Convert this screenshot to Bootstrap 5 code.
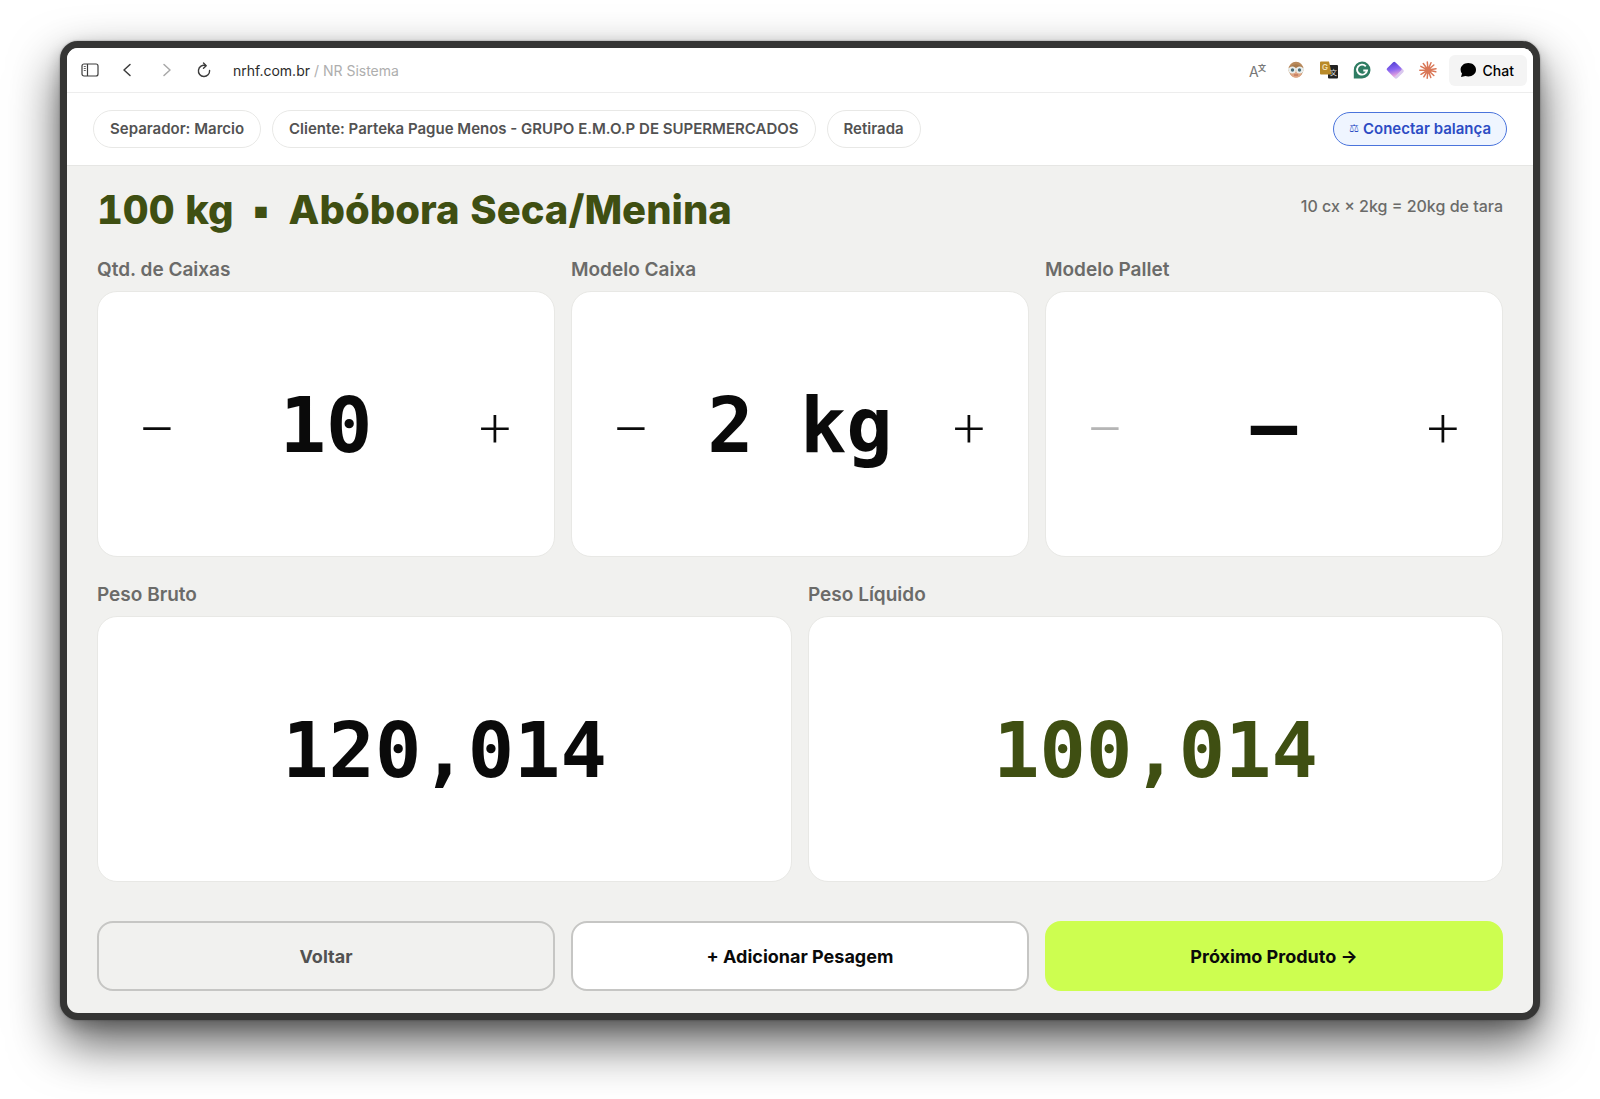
<!DOCTYPE html>
<html lang="pt-BR">
<head>
<meta charset="utf-8">
<meta name="viewport" content="width=device-width, initial-scale=1">
<title>NR Sistema</title>
<link href="https://cdn.jsdelivr.net/npm/bootstrap@5.3.0/dist/css/bootstrap.min.css" rel="stylesheet">
<style>
  body { font-family: Inter, "Liberation Sans", sans-serif; background: #fff; color: #0a0a0a; }
  .desktop { min-height: 100vh; padding: 41px 60px 79px; }
  .window { border: 7px solid #353534; border-radius: 18px; background: #f1f1ef; overflow: hidden;
    box-shadow: 0 23px 50px rgba(0,0,0,.65), 0 6px 16px rgba(0,0,0,.2), 0 0 2px rgba(0,0,0,.4); }
  .toolbar { height: 45px; padding: 0 6px 0 14px; border-bottom: 1px solid #ededed; font-size: 14px; }
  .tool { padding: 0; border: 0; background: none; display: flex; color: #3c3c3c; }
  .nav-tools { gap: 20px; }
  .ext-tools { gap: 15px; margin-right: 12px; }
  .site { color: #2b2b2b; text-decoration: none; }
  .crumb { color: #aeaeae; }
  .chat-btn { height: 31px; padding: 0 13px 0 11px; gap: 7px; border: 0; border-radius: 6px; background: #f4f4f4; color: #000; font-weight: 500; }
  .info-bar { padding: 17px 26px; border-bottom: 1px solid #e6e6e4; }
  .chips { gap: 11px; }
  .chip { border: 1px solid #e8e8e6; border-radius: 19px; padding: 0 16px; line-height: 36px; font-size: 15px; font-weight: 600; color: #525252; }
  .scale-btn { border: 1px solid #4a74dc; border-radius: 17px; padding: 0 15px; line-height: 32px; font-size: 15px; font-weight: 600; color: #2c4cc4; background: #eff5ff; gap: 4px; }
  .scale-icon { font-family: "DejaVu Sans", sans-serif; font-size: 11px; font-weight: 400; }
  .board { padding: 19px 30px 22px; }
  .product { font-size: 40px; line-height: 50px; font-weight: 800; color: #3f4f12; font-variant-numeric: tabular-nums; margin-bottom: 21px; }
  .product-dot { margin: 0 8px; }
  .tare { font-size: 16px; line-height: 24px; padding-top: 9px; font-weight: 500; color: #6b6b69; }
  .fields { --bs-gutter-x: 16px; --bs-gutter-y: 0; }
  .actions { margin-top: 39px; }
  .field-label { font-size: 19px; line-height: 28px; font-weight: 600; color: #6b6b69; margin-bottom: 7px; display: block; }
  .panel { height: 266px; border: 1px solid #e8e8e5; border-radius: 20px; background: #fff; }
  .stepper { padding: 0 31px; }
  .step-btn { width: 56px; height: 64px; padding: 0; border: 0; background: none; color: #0a0a0a; font-size: 64px; line-height: 64px; font-weight: 200; }
  .step-btn:disabled { color: #b5b5b5; }
  .reading { font-family: "DejaVu Sans Mono", "Liberation Mono", monospace; font-weight: 700; font-size: 77px; line-height: 90px; padding-top: 3px; color: #0a0a0a; }
  .reading-net { color: #3f4f12; }
  .action { width: 100%; height: 70px; border: 2px solid #c6c6c4; border-radius: 16px; font-size: 18px; font-weight: 700; background: none; color: #525252; }
  .action-add { background: #fff; color: #0a0a0a; }
  .action-next { background: #cdfe50; border-color: #cdfe50; color: #0a0a0a; }
</style>
<script src="https://cdn.jsdelivr.net/npm/bootstrap@5.3.0/dist/js/bootstrap.bundle.min.js"></script>
</head>
<body>
<div class="desktop">
  <div class="window">
    <header class="toolbar d-flex align-items-center bg-white">
      <div class="nav-tools d-flex align-items-center">
        <button class="tool" aria-label="Barra lateral"><svg width="18" height="18" viewBox="0 0 18 18" fill="none" stroke="currentColor" stroke-width="1.200"><rect x="1" y="3" width="16" height="12" rx="2"/><path d="M6.500 3v12"/><path d="M2.800 5.500h2M2.800 7.500h2M2.800 9.500h2" stroke-width=".8"/></svg></button>
        <button class="tool" aria-label="Página anterior"><svg width="18" height="18" viewBox="0 0 18 18" fill="none" stroke="currentColor" stroke-width="1.500" stroke-linecap="round" stroke-linejoin="round"><path d="M11 3.500 5 9l6 5.500"/></svg></button>
        <button class="tool" aria-label="Próxima página"><svg width="18" height="18" viewBox="0 0 18 18" fill="none" stroke="#a8a8a8" stroke-width="1.500" stroke-linecap="round" stroke-linejoin="round"><path d="m7 3.500 6 5.500-6 5.500"/></svg></button>
        <button class="tool" aria-label="Recarregar"><svg width="18" height="18" viewBox="0 0 18 18" fill="none" stroke="currentColor" stroke-width="1.400" stroke-linecap="round" stroke-linejoin="round"><path d="M14.600 9.500A5.600 5.600 0 1 1 10.500 4.500"/><path d="m8.500 2 2.700 2.700L8.500 7.200"/></svg></button>
        <div><a class="site" href="#">nrhf.com.br</a> <span class="crumb">/ NR Sistema</span></div>
      </div>
      <div class="ext-tools d-flex align-items-center ms-auto">
        <button class="tool me-1" aria-label="Traduzir página"><svg width="20" height="20" viewBox="0 0 20 20" fill="#777"><text x="1" y="17" font-family="Inter, sans-serif" font-size="14">A</text><text x="10" y="11" font-family="'Noto Sans CJK SC', sans-serif" font-size="8" font-weight="700">文</text></svg></button>
        <button class="tool" aria-label="Perfil"><svg width="18" height="18" viewBox="0 0 18 18"><ellipse cx="9" cy="8.500" rx="7.500" ry="7.800" fill="#b98a5c"/><path d="M3 10h12c0 4-2.500 6.800-6 6.800S3 14 3 10z" fill="#dfa583"/><path d="M2.500 6Q9 .5 15.500 6z" fill="#a87b4e"/><circle cx="5.300" cy="9" r="3.600" fill="#e9eeee"/><circle cx="12.700" cy="9" r="3.600" fill="#e9eeee"/><path d="M1 8h16" stroke="#e9eeee" stroke-width="1.500"/><circle cx="5.500" cy="9" r="1.700" fill="#4b6e78"/><circle cx="12.500" cy="9" r="1.700" fill="#4b6e78"/><path d="M7 14h4" stroke="#b5654f" stroke-width="1"/></svg></button>
        <button class="tool" aria-label="Tradutor"><svg width="18" height="18" viewBox="0 0 18 18"><rect x="8" y="4" width="10" height="13.500" rx="1" fill="#222"/><path d="M1 .5h8l3 13H1a1 1 0 0 1-1-1v-11a1 1 0 0 1 1-1z" fill="#b98a28"/><text x="2" y="9" font-family="Inter, sans-serif" font-size="8" font-weight="600" fill="#f1dfb4">G</text><text x="10" y="14" font-family="'Noto Sans CJK SC', sans-serif" font-size="7" fill="#ddd">文</text></svg></button>
        <button class="tool" aria-label="Corretor"><svg width="18" height="18" viewBox="0 0 18 18"><path d="M9 .5A8.500 8.500 0 1 1 9 17.500H.8V9A8.300 8.500 0 0 1 9 .5z" fill="#2f7d63"/><path d="M12.800 5.300A5 5 0 1 0 14 9.500h-3.700" fill="none" stroke="#fff" stroke-width="1.900"/></svg></button>
        <button class="tool" aria-label="Extensão"><svg width="18" height="18" viewBox="0 0 18 18"><defs><linearGradient id="gem" x1="0" y1=".2" x2="1" y2=".8"><stop offset="0" stop-color="#5a45d6"/><stop offset=".5" stop-color="#8a66f2"/><stop offset="1" stop-color="#eba6dc"/></linearGradient></defs><rect x="4" y="4" width="12" height="12" rx="2" transform="rotate(45 10 10)" fill="#d9c8ee"/><rect x="2.500" y="2.500" width="11.500" height="11.500" rx="1.500" transform="rotate(45 8.200 8.200)" fill="url(#gem)"/></svg></button>
        <button class="tool" aria-label="Assistente"><svg width="18" height="18" viewBox="0 0 18 18" stroke="#d97757" stroke-width="1.500" stroke-linecap="round"><path d="M9 9 8.300 1M9 9l3-7.300M9 9l5.800-5M9 9l8-1.300M9 9l7.800 1.800M9 9l5.800 5.500M9 9l2.800 7.500M9 9l-.8 8.200M9 9l-4.200 6.800M9 9l-7 4.300M9 9l-8.200.2M9 9 1.800 5.300M9 9 4.300 2.500"/></svg></button>
      </div>
      <button class="chat-btn d-flex align-items-center"><svg width="16" height="16" viewBox="0 0 16 16"><path d="M8.300 1C12.700 1 16 3.900 16 7.700s-3.300 6.700-7.700 6.700c-1 0-2-.2-2.900-.5L1 15l1-3.400A6.300 6.300 0 0 1 .6 7.700C.6 3.900 3.900 1 8.300 1z"/></svg><span>Chat</span></button>
    </header>
    <div class="info-bar d-flex align-items-center justify-content-between bg-white">
      <div class="chips d-flex">
        <span class="chip">Separador: Marcio</span>
        <span class="chip">Cliente: Parteka Pague Menos - GRUPO E.M.O.P DE SUPERMERCADOS</span>
        <span class="chip">Retirada</span>
      </div>
      <button class="scale-btn d-flex align-items-center"><span class="scale-icon">⚖</span><span>Conectar balança</span></button>
    </div>
    <main class="board">
      <div class="d-flex justify-content-between">
        <h1 class="product">100 kg <span class="product-dot">▪</span> Abóbora Seca/Menina</h1>
        <div class="tare">10 cx × 2kg = 20kg de tara</div>
      </div>
      <div class="row fields">
        <div class="col-4">
          <span class="field-label" id="lbl-boxes">Qtd. de Caixas</span>
          <div class="panel stepper d-flex align-items-center justify-content-between" role="group" aria-labelledby="lbl-boxes">
            <button class="step-btn">−</button><output class="reading">10</output><button class="step-btn">+</button>
          </div>
        </div>
        <div class="col-4">
          <span class="field-label" id="lbl-box-model">Modelo Caixa</span>
          <div class="panel stepper d-flex align-items-center justify-content-between" role="group" aria-labelledby="lbl-box-model">
            <button class="step-btn">−</button><output class="reading">2 kg</output><button class="step-btn">+</button>
          </div>
        </div>
        <div class="col-4">
          <span class="field-label" id="lbl-pallet">Modelo Pallet</span>
          <div class="panel stepper d-flex align-items-center justify-content-between" role="group" aria-labelledby="lbl-pallet">
            <button class="step-btn" disabled>−</button><output class="reading">—</output><button class="step-btn">+</button>
          </div>
        </div>
      </div>
      <div class="row fields mt-4">
        <div class="col-6">
          <label class="field-label" for="gross">Peso Bruto</label>
          <div class="panel d-flex align-items-center justify-content-center"><output class="reading" id="gross">120,014</output></div>
        </div>
        <div class="col-6">
          <label class="field-label" for="net">Peso Líquido</label>
          <div class="panel d-flex align-items-center justify-content-center"><output class="reading reading-net" id="net">100,014</output></div>
        </div>
      </div>
      <div class="row fields actions">
        <div class="col-4"><button class="action">Voltar</button></div>
        <div class="col-4"><button class="action action-add">+ Adicionar Pesagem</button></div>
        <div class="col-4"><button class="action action-next">Próximo Produto →</button></div>
      </div>
    </main>
  </div>
</div>
</body>
</html>
